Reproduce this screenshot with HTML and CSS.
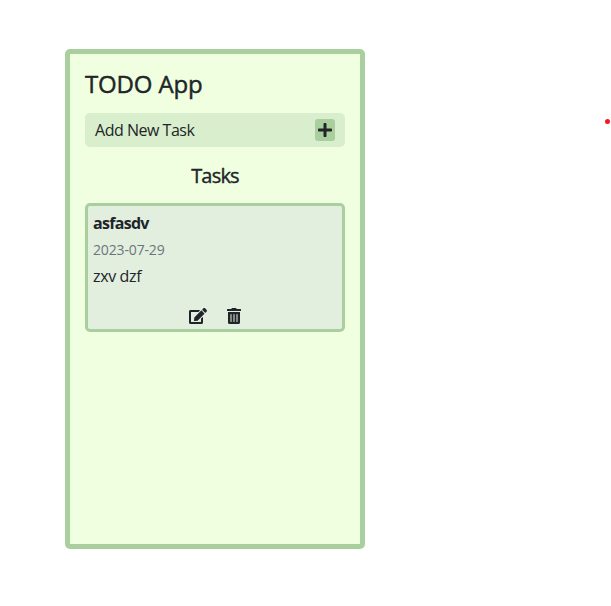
FILE: index.html
```html
<!DOCTYPE html>
<html lang="en">
<head>
<meta charset="utf-8">
<title>TODO App</title>
<link rel="stylesheet" href="styles.css">
</head>
<body>
<main class="app">
  <h1 class="title">TODO App</h1>
  <div class="add-bar">
    <span class="add-label">Add New Task</span>
    <button class="add-button" aria-label="Add">
      <svg width="14" height="16" viewBox="0 0 448 512"><path d="M416 208H272V64c0-17.67-14.33-32-32-32h-32c-17.67 0-32 14.33-32 32v144H32c-17.67 0-32 14.33-32 32v32c0 17.67 14.33 32 32 32h144v144c0 17.67 14.33 32 32 32h32c17.67 0 32-14.33 32-32V304h144c17.67 0 32-14.33 32-32v-32c0-17.67-14.33-32-32-32z"/></svg>
    </button>
  </div>
  <h2 class="heading">Tasks</h2>
  <article class="task">
    <span class="name">asfasdv</span>
    <span class="date">2023-07-29</span>
    <p class="description">zxv dzf</p>
    <div class="options">
      <svg width="18" height="16" viewBox="0 0 576 512"><path d="M402.6 83.2l90.2 90.2c3.8 3.8 3.8 10 0 13.8L274.4 405.6l-92.8 10.3c-12.4 1.4-22.9-9.1-21.5-21.5l10.3-92.8L388.8 83.2c3.8-3.8 10-3.8 13.8 0zm162-22.9l-48.8-48.8c-15.2-15.2-39.9-15.2-55.2 0l-35.4 35.4c-3.8 3.8-3.8 10 0 13.8l90.2 90.2c3.8 3.8 10 3.8 13.8 0l35.4-35.4c15.2-15.3 15.2-40 0-55.2zM384 346.2V448H64V128h229.8c3.2 0 6.2-1.3 8.5-3.5l40-40c7.6-7.6 2.2-20.5-8.5-20.5H48C21.5 64 0 85.5 0 112v352c0 26.5 21.5 48 48 48h352c26.5 0 48-21.5 48-48V306.2c0-10.7-12.9-16-20.5-8.5l-40 40c-2.2 2.3-3.5 5.3-3.5 8.5z"/></svg>
      <svg width="14" height="16" viewBox="0 0 448 512"><path d="M32 464a48 48 0 0 0 48 48h288a48 48 0 0 0 48-48V128H32zm272-256a16 16 0 0 1 32 0v224a16 16 0 0 1-32 0zm-96 0a16 16 0 0 1 32 0v224a16 16 0 0 1-32 0zm-96 0a16 16 0 0 1 32 0v224a16 16 0 0 1-32 0zM432 32H312l-9.4-18.7A24 24 0 0 0 281.1 0H166.8a23.72 23.72 0 0 0-21.4 13.3L136 32H16A16 16 0 0 0 0 48v32a16 16 0 0 0 16 16h416a16 16 0 0 0 16-16V48a16 16 0 0 0-16-16z"/></svg>
    </div>
  </article>
</main>
<span class="dot"></span>
</body>
</html>
```
FILE: styles.css
```css
* { box-sizing: border-box; }

body {
  margin: 0;
  height: 606px;
  overflow: hidden;
  background: #fff;
  color: #212529;
  font: 16px/24px "Open Sans", "Noto Sans", sans-serif;
}

.app {
  width: 300px;
  height: 500px;
  margin: 49px 0 0 65px;
  padding: 15px;
  border: 5px solid #aacf9f;
  border-radius: 5px;
  background: #f0ffdf;
}

.title {
  margin: 0 0 15px;
  font-size: 24px;
  line-height: 29px;
  font-weight: 500;
  letter-spacing: -0.15px;
  -webkit-text-stroke: 0.45px #212529;
}

.add-bar {
  display: flex;
  align-items: center;
  justify-content: space-between;
  height: 34px;
  padding: 5px 10px;
  border-radius: 5px;
  background: #d9eecc;
}

.add-label { letter-spacing: -0.48px; }

.add-button {
  display: flex;
  align-items: center;
  justify-content: center;
  width: 20px;
  height: 22px;
  padding: 0;
  border: 0;
  border-radius: 3px;
  background: #aacf9f;
}

svg { display: block; fill: #212529; }

.heading {
  margin: 17px 0 15px;
  font-size: 20px;
  line-height: 24px;
  font-weight: 500;
  letter-spacing: -0.8px;
  text-align: center;
  -webkit-text-stroke: 0.4px #212529;
}

.task {
  display: flex;
  flex-direction: column;
  height: 129px;
  padding: 5px;
  border: 3px solid #aacf9f;
  border-radius: 5px;
  background: #e2eede;
}

.name {
  font-weight: 700;
  letter-spacing: -0.7px;
}

.date {
  margin-top: 4px;
  font-size: 14px;
  line-height: 21px;
  letter-spacing: -0.15px;
  color: #6c757d;
}

.description {
  margin: 4px 0 0;
  letter-spacing: -0.35px;
}

.options {
  display: flex;
  justify-content: center;
  gap: 20px;
  margin-top: 20px;
}

.dot {
  position: absolute;
  left: 605px;
  top: 119px;
  width: 5px;
  height: 5px;
  border-radius: 50%;
  background: #ed1c24;
}
```
